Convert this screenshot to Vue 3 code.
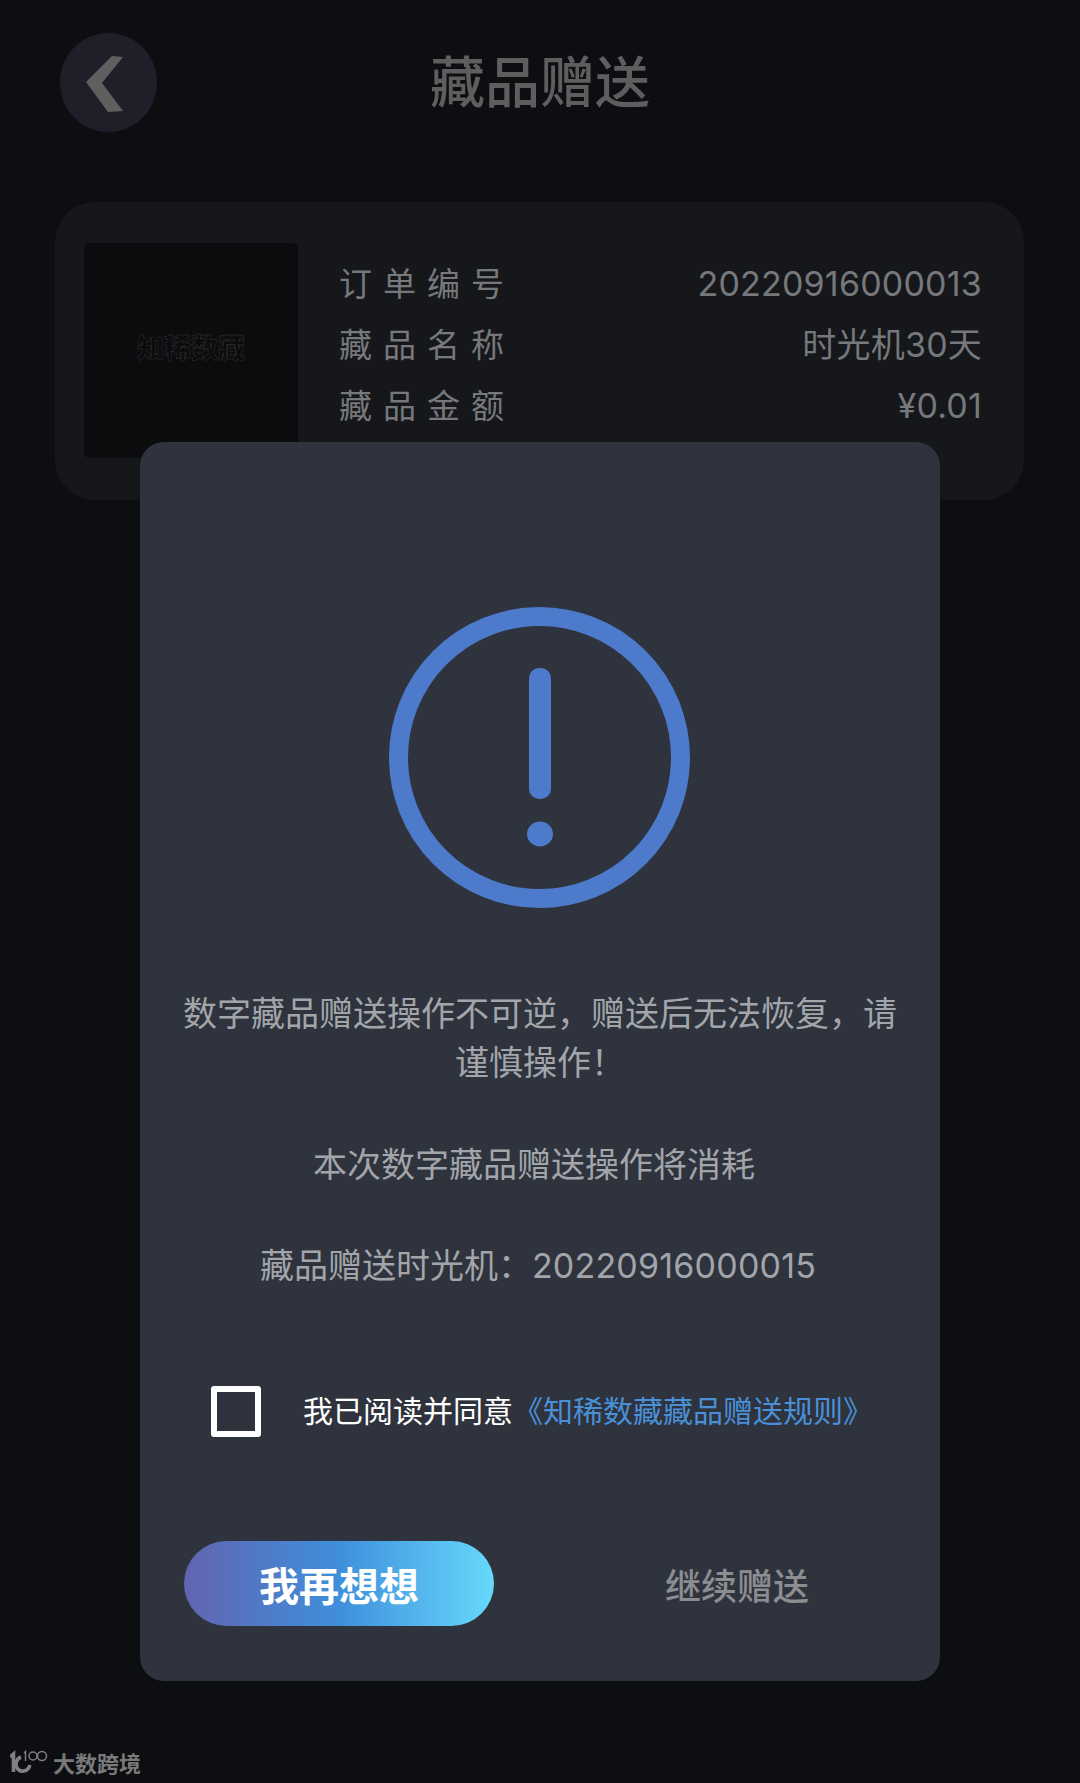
<template>
  <div class="page">
    <header class="top-bar">
      <button class="back-btn" type="button" aria-label="返回">
        <svg width="97" height="99" viewBox="0 0 97 99">
          <path d="M52 23 L63 24 L42 50 L63 78 L48 79 L26 49 Z" fill="#5f5f60" />
        </svg>
      </button>
      <h1 class="title">藏品赠送</h1>
    </header>

    <section class="order-card">
      <div class="cover"><span class="cover-text">知稀数藏</span></div>
      <div class="order-info">
        <div class="info-row" v-for="row in orderRows" :key="row.label">
          <span class="info-label">{{ row.label }}</span>
          <span class="info-value">{{ row.value }}</span>
        </div>
      </div>
    </section>

    <div class="dialog">
      <svg class="alert-icon" width="301" height="301" viewBox="0 0 301 301">
        <circle cx="150.5" cy="150.5" r="141" fill="none" stroke="#4d7acb" stroke-width="19" />
        <rect x="140" y="61" width="22" height="131" rx="10" fill="#4d7acb" />
        <ellipse cx="151" cy="227" rx="13" ry="12.5" fill="#4d7acb" />
      </svg>

      <p class="notice first">数字藏品赠送操作不可逆，赠送后无法恢复，请谨慎操作！</p>
      <p class="notice second">本次数字藏品赠送操作将消耗</p>
      <p class="notice third">藏品赠送时光机：<span class="serial">20220916000015</span></p>

      <label class="agree">
        <span class="checkbox" :class="{ checked: agreed }" @click.prevent="agreed = !agreed"></span>
        <span class="agree-text">我已阅读并同意<a class="rule-link">《知稀数藏藏品赠送规则》</a></span>
      </label>

      <div class="actions">
        <button class="btn-primary" type="button">我再想想</button>
        <button class="btn-plain" type="button">继续赠送</button>
      </div>
    </div>

    <div class="watermark">
      <svg width="38" height="24" viewBox="0 0 38 24" fill="none" stroke="#808080">
        <path d="M0 7 L3.5 4 V22" stroke-width="3.6" />
        <path d="M11 7 C6 9 5 14 7 18 C10 23 18 22 20 15" stroke-width="3.6" />
        <path d="M14 3 L15.5 1.5 V11" stroke-width="1.4" />
        <circle cx="23" cy="6" r="4" stroke-width="1.5" />
        <circle cx="32" cy="6" r="4.5" stroke-width="1.5" />
      </svg>
      <span>大数跨境</span>
    </div>
  </div>
</template>

<script setup>
import { ref } from 'vue'

const agreed = ref(false)

const orderRows = [
  { label: '订单编号', value: '20220916000013' },
  { label: '藏品名称', value: '时光机30天' },
  { label: '藏品金额', value: '¥0.01' }
]
</script>

<style>
html,
body {
  margin: 0;
  background: #0c0e11;
}
</style>

<style scoped>
.page {
  position: relative;
  height: 1783px;
  overflow: hidden;
  background: #0c0e11;
  font-family: Inter, "Noto Sans CJK SC", sans-serif;
}

.top-bar {
  position: relative;
  display: flex;
  justify-content: center;
  align-items: center;
  height: 99px;
  padding-top: 33px;
}

.back-btn {
  position: absolute;
  left: 60px;
  top: 33px;
  width: 97px;
  height: 99px;
  padding: 0;
  border: none;
  border-radius: 50%;
  background: #1e1f28;
}

.back-btn svg {
  display: block;
}

.title {
  margin: 0;
  font-size: 55px;
  font-weight: 500;
  line-height: 99px;
  color: #5e5e5f;
}

.order-card {
  display: flex;
  box-sizing: border-box;
  width: 969px;
  height: 298px;
  margin: 70px 0 0 55px;
  padding: 41px 42px 0 29px;
  border-radius: 40px;
  background: #15171b;
}

.cover {
  display: flex;
  flex: none;
  justify-content: center;
  align-items: center;
  width: 214px;
  height: 215px;
  border-radius: 6px;
  background: #0b0c0e;
}

.cover-text {
  margin-bottom: 8px;
  font-size: 27px;
  font-weight: 900;
  color: #0b0c0e;
  -webkit-text-stroke: 0.6px #2b2b2c;
}

.order-info {
  flex: 1;
  margin: 10px 0 0 41px;
}

.info-row {
  display: flex;
  justify-content: space-between;
  align-items: center;
  height: 61px;
  font-size: 34px;
  line-height: 44px;
  letter-spacing: 0.2px;
  color: #77787b;
}

.info-label {
  font-size: 33px;
  letter-spacing: 11px;
  margin-right: -11px;
}

.dialog {
  position: absolute;
  left: 140px;
  top: 442px;
  box-sizing: border-box;
  width: 800px;
  height: 1239px;
  padding-top: 165px;
  border-radius: 24px;
  background: #2e333d;
}

.alert-icon {
  display: block;
  margin-left: 249px;
}

.notice {
  margin: 0;
  padding: 0 40px;
  font-size: 34px;
  line-height: 49px;
  text-align: center;
  color: #a2a5aa;
}

.notice.first {
  margin-top: 81px;
}

.notice.second {
  margin-top: 53px;
  padding-right: 52px;
}

.notice.third {
  margin-top: 52px;
  padding-right: 44px;
}

.serial {
  letter-spacing: 0.2px;
}

.agree {
  display: flex;
  align-items: center;
  gap: 42px;
  margin: 96px 0 0 71px;
}

.checkbox {
  flex: none;
  box-sizing: border-box;
  width: 50px;
  height: 51px;
  border: 6px solid #fff;
  border-radius: 3px;
}

.checkbox.checked {
  background: #4a90d9;
}

.agree-text {
  margin-bottom: 6px;
  font-size: 30px;
  color: #fff;
  white-space: nowrap;
}

.rule-link {
  color: #4a90d9;
}

.actions {
  display: flex;
  align-items: center;
  gap: 88px;
  margin: 104px 0 0 44px;
}

.btn-primary,
.btn-plain {
  width: 310px;
  height: 85px;
  padding: 0;
  border: none;
  font-family: inherit;
}

.btn-primary {
  border-radius: 43px;
  font-size: 40px;
  font-weight: 700;
  color: #fff;
  background: linear-gradient(90deg, #6264b0 0%, #3f8fdc 50%, #66d9fc 100%);
}

.btn-plain {
  font-size: 36px;
  font-weight: 500;
  color: #8b8d91;
  background: none;
}

.watermark {
  position: absolute;
  left: 10px;
  bottom: 5px;
  display: flex;
  align-items: center;
  gap: 5px;
  font-size: 22px;
  font-weight: 700;
  color: #7a7a7a;
}
</style>
